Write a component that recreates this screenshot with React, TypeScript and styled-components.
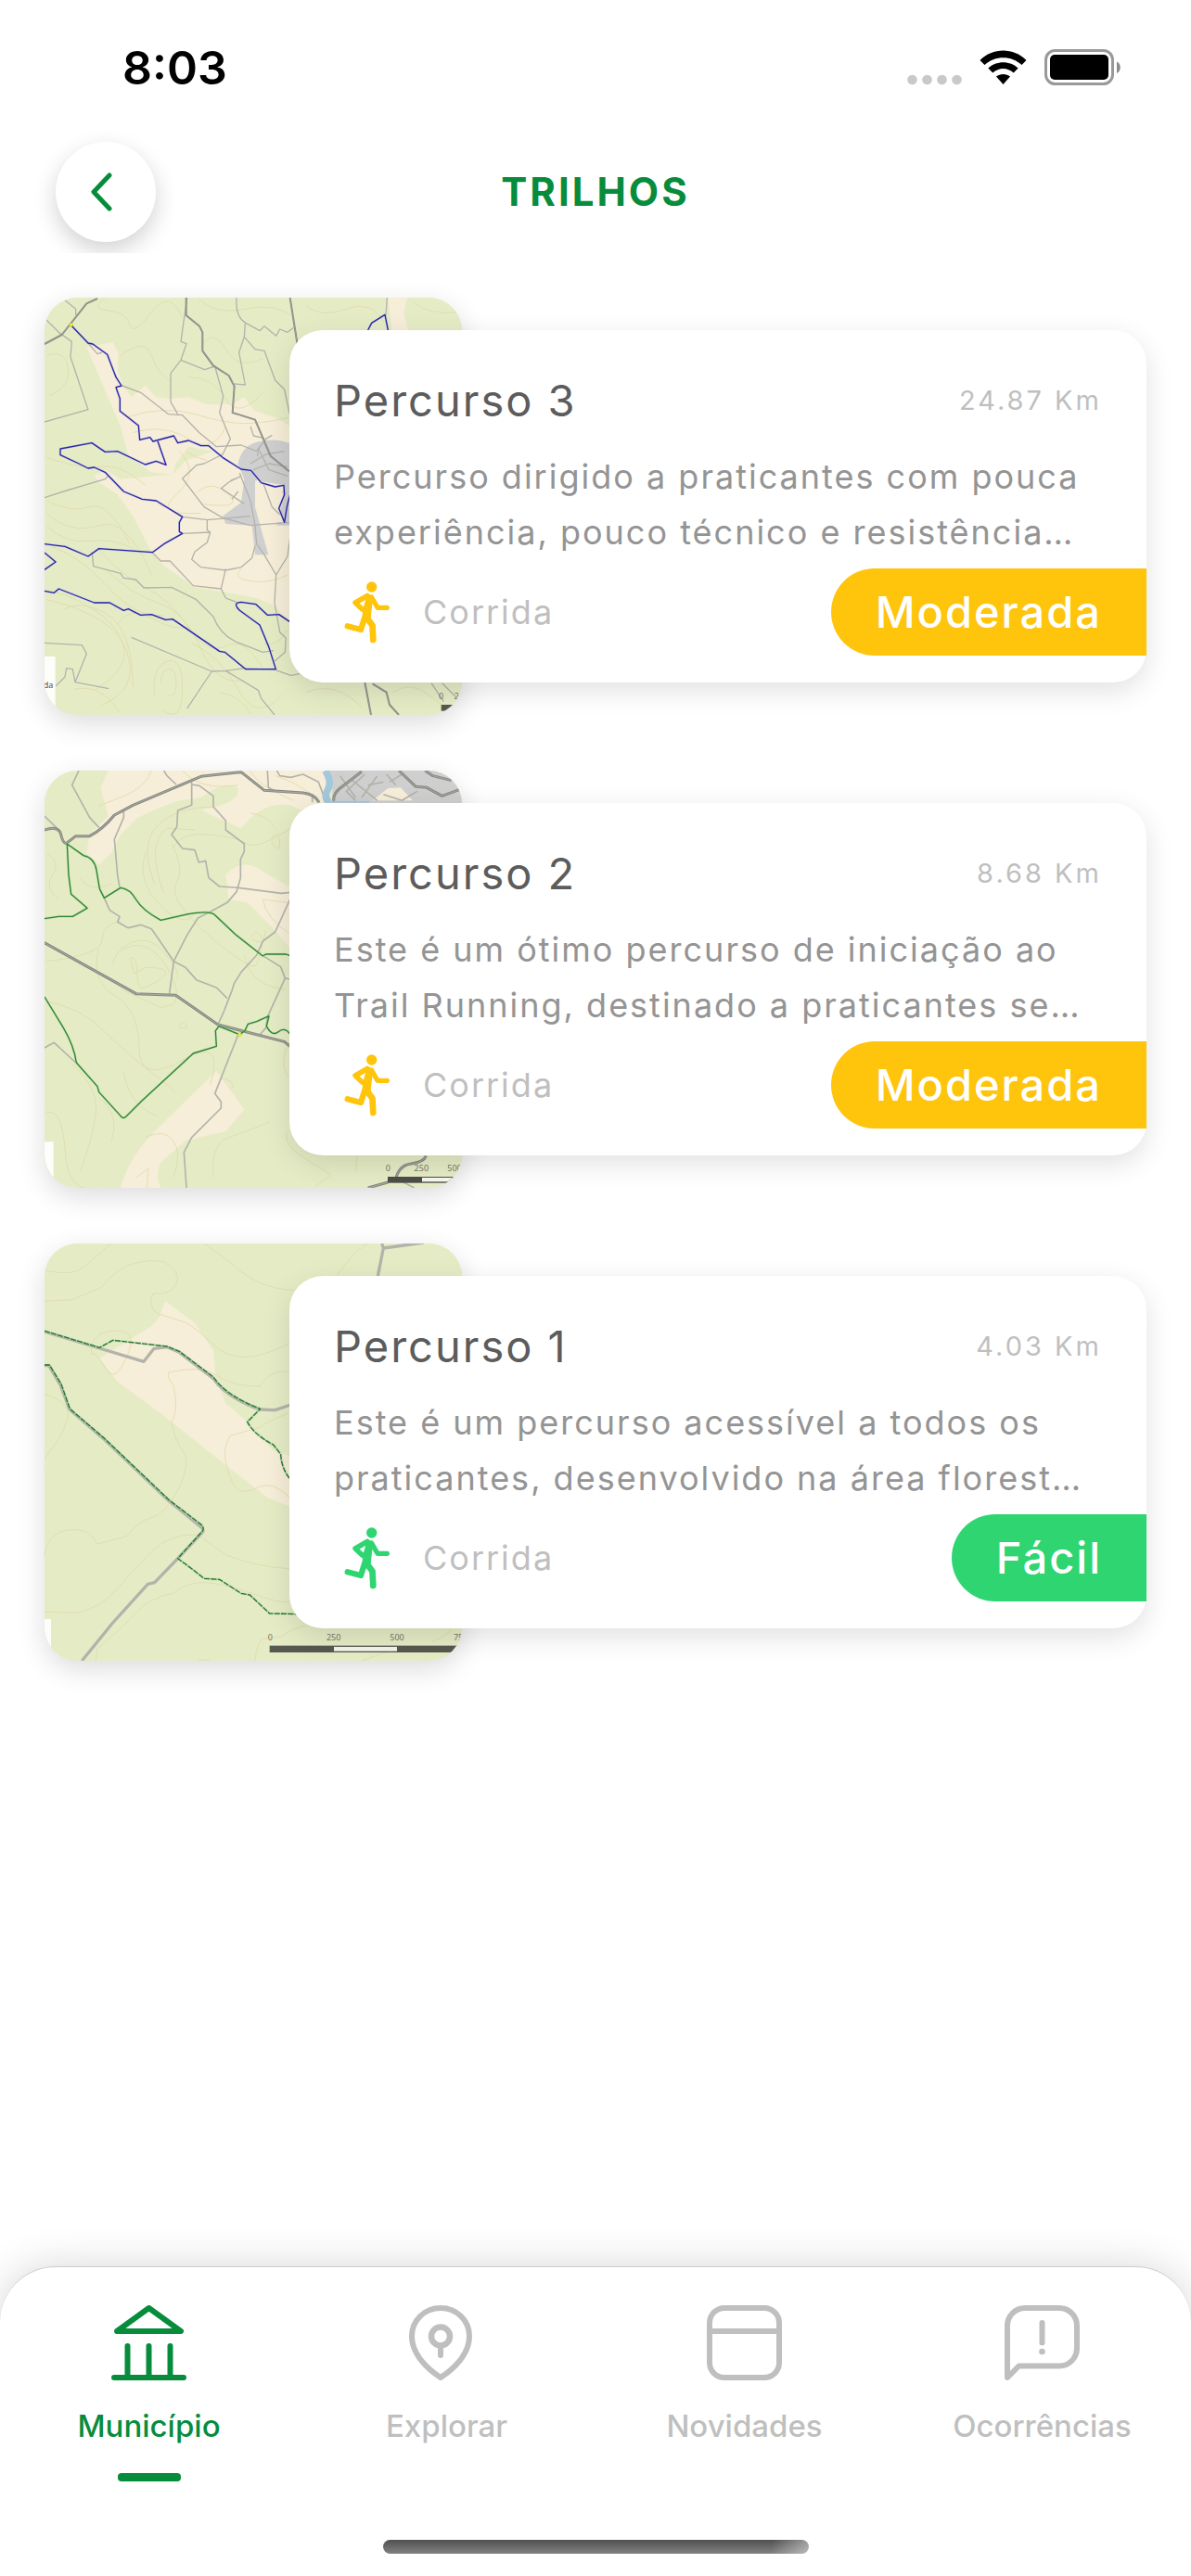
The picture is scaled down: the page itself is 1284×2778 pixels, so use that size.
import React from 'react';
import styled, { createGlobalStyle } from 'styled-components';

const GREEN = '#078c3c';
const GREY = '#bfbfbf';
const YELLOW = '#ffc40c';
const LIME = '#2fd571';

const GlobalStyle = createGlobalStyle`
  *, *::before, *::after { box-sizing: border-box; }
  body { margin: 0; background: #fff; font-family: Inter, "Liberation Sans", sans-serif; }
  h1, h2, p, ul { margin: 0; padding: 0; }
`;

const Screen = styled.div`
  min-height: 100vh;
  display: flex;
  flex-direction: column;
  background: #fff;
`;

const StatusBar = styled.div`
  height: 138px;
  padding: 8px 74px 0 132px;
  display: flex;
  align-items: center;
  justify-content: space-between;
`;

const Clock = styled.time`
  font-size: 50px;
  line-height: 60px;
  font-weight: 600;
  color: #000;
`;

const StatusIcons = styled.div`
  display: flex;
  align-items: center;
  gap: 19px;
`;

const Header = styled.header`
  display: grid;
  grid-template-columns: 1fr auto 1fr;
  align-items: center;
  padding: 15px 60px 12px;
  overflow: hidden;
`;

const BackButton = styled.button`
  width: 108px;
  height: 108px;
  padding: 0 9px 0 0;
  border: 0;
  border-radius: 50%;
  background: #fff;
  box-shadow: 0 9px 24px rgba(0, 0, 0, 0.18);
  display: grid;
  place-items: center;
  cursor: pointer;
`;

const Title = styled.h1`
  font-size: 42px;
  line-height: 48px;
  font-weight: 700;
  letter-spacing: 3px;
  color: ${GREEN};
`;

const TrailList = styled.ul`
  list-style: none;
  display: flex;
  flex-direction: column;
  gap: 60px;
  padding: 48px;
`;

const Trail = styled.li`
  display: flex;
  align-items: center;
`;

const MapFrame = styled.div`
  flex: none;
  width: 450px;
  height: 450px;
  border-radius: 36px;
  overflow: hidden;
  background: #e5ecc5;
  box-shadow: 0 9px 30px rgba(0, 0, 0, 0.14);

  svg { display: block; width: 100%; height: 100%; }
`;

const Card = styled.article`
  flex: 1;
  min-width: 0;
  margin-left: -186px;
  padding: 47px 0 29px 48px;
  border-radius: 36px;
  background: #fff;
  box-shadow: 0 9px 30px rgba(0, 0, 0, 0.12);
`;

const CardHead = styled.div`
  display: flex;
  align-items: center;
  justify-content: space-between;
  padding-right: 48px;
`;

const TrailName = styled.h2`
  font-size: 47px;
  line-height: 58px;
  font-weight: 400;
  letter-spacing: 2px;
  color: #5c5c5c;
`;

const Distance = styled.span`
  font-size: 29px;
  line-height: 36px;
  letter-spacing: 3px;
  color: ${GREY};
`;

const Description = styled.p`
  margin-top: 23px;
  padding-right: 24px;
  font-size: 36px;
  line-height: 60px;
  letter-spacing: 2px;
  color: #949494;
`;

const CardFoot = styled.div`
  margin-top: 9px;
  display: flex;
  align-items: center;
  justify-content: space-between;
`;

const Activity = styled.div`
  display: flex;
  align-items: center;
  gap: 24px;
  font-size: 36px;
  line-height: 48px;
  letter-spacing: 2px;
  color: ${GREY};
`;

const Badge = styled.span<{ $color: string }>`
  padding: 18px 48px;
  border-radius: 47px 0 0 47px;
  background: ${(p) => p.$color};
  color: #fff;
  font-size: 47px;
  line-height: 58px;
  font-weight: 500;
  letter-spacing: 2px;
`;

const TabBar = styled.nav`
  margin-top: auto;
  padding-top: 41px;
  border-top: 1px solid #ccc;
  border-radius: 60px 60px 0 0;
  background: #fff;
  box-shadow: 0 0 45px rgba(0, 0, 0, 0.16);
  display: flex;
  flex-direction: column;
  align-items: center;
`;

const Tabs = styled.div`
  width: 100%;
  display: grid;
  grid-template-columns: repeat(4, 1fr);
`;

const Tab = styled.a<{ $active?: boolean }>`
  display: flex;
  flex-direction: column;
  align-items: center;
  color: ${(p) => (p.$active ? GREEN : GREY)};
  font-size: 33px;
  line-height: 42px;
  font-weight: 500;
  text-decoration: none;

  svg { margin-bottom: 28px; }

  &::after {
    content: '';
    width: 68px;
    height: 9px;
    margin-top: 30px;
    border-radius: 4px;
    background: ${(p) => (p.$active ? GREEN : 'transparent')};
  }
`;

const HomeIndicator = styled.div`
  width: 459px;
  height: 15px;
  margin: 63px 0 24px;
  border-radius: 8px;
  background:
    linear-gradient(100deg, transparent 91%, rgba(255, 255, 255, 0.45) 100%),
    linear-gradient(#505050, #828282);
`;

/* ---------- icons ---------- */

const SignalDots = () => (
  <svg width="59" height="40" viewBox="0 0 59 40" fill="#c9c9c9" aria-hidden="true">
    {[5.5, 21.5, 37.5, 53.5].map((x) => (
      <circle key={x} cx={x} cy="33" r="5.3" />
    ))}
  </svg>
);

const Wifi = () => (
  <svg width="51" height="40" viewBox="0 0 51 40" aria-hidden="true">
    <path d="M0.5 12C14-2 37-2 50.5 12L45.500 17C34.500 6.500 16.500 6.500 5.500 17Z" />
    <path d="M9.300 20.500C18 12 33 12 41.700 20.500L36.700 25.500C30 19.500 21 19.500 14.300 25.500Z" />
    <path d="M18 29.500C22 26 29 26 33 29.500L25.500 38Z" />
  </svg>
);

const Battery = () => (
  <svg width="84" height="40" viewBox="0 0 84 40" aria-hidden="true">
    <rect x="1.5" y="1.5" width="72" height="36" rx="10" fill="none" stroke="#999" strokeWidth="3" />
    <rect x="6" y="6" width="63" height="27" rx="5" />
    <path d="M78 13.500C83 15.500 83 24 78 26Z" fill="#8c8c8c" />
  </svg>
);

const Chevron = () => (
  <svg width="24" height="42" viewBox="0 0 24 42" fill="none" stroke={GREEN} strokeWidth="5" strokeLinecap="round" strokeLinejoin="round" aria-hidden="true">
    <path d="M20 3L3 21L20 39" />
  </svg>
);

const Runner = ({ color }: { color: string }) => (
  <svg width="72" height="72" viewBox="0 0 72 72" fill="none" stroke={color} strokeLinecap="round" strokeLinejoin="round" aria-hidden="true">
    <circle cx="40.7" cy="9" r="5.7" fill={color} stroke="none" />
    <path d="M36 18.500L23 26L30.500 33" strokeWidth="5.5" />
    <path d="M40.500 20L47 31.300H57.300" strokeWidth="5.3" />
    <path d="M37.500 19L40 20.500L38.500 32L37.500 42L32.500 43L33.500 33Z" fill={color} strokeWidth="4.5" />
    <path d="M33 42.500L29 55L14.700 51.300" strokeWidth="6.3" />
    <path d="M36 43L41.500 50.500L42.300 66" strokeWidth="6.7" />
  </svg>
);

const TabIcon = ({ children }: { children: React.ReactNode }) => (
  <svg width="81" height="81" viewBox="0 0 81 81" fill="none" stroke="currentColor" strokeWidth="6" strokeLinecap="round" strokeLinejoin="round" aria-hidden="true">
    {children}
  </svg>
);

const MunicipioIcon = () => (
  <TabIcon>
    <path d="M40.500 3L75 28H6Z" />
    <path d="M17.500 44V78M40.500 44V78M63.500 44V78M3 78H78" />
  </TabIcon>
);

const ExplorarIcon = () => (
  <TabIcon>
    <path d="M34 3C16.500 3 3 16.500 3 33.500C3 53 20 69 34 78C48 69 65 53 65 33.500C65 16.500 51.500 3 34 3Z" />
    <circle cx="34" cy="33.5" r="10" strokeWidth="6.5" />
    <path d="M34 44V54" />
  </TabIcon>
);

const NovidadesIcon = () => (
  <TabIcon>
    <rect x="3" y="3" width="75" height="75" rx="16" />
    <path d="M3 28H78" />
  </TabIcon>
);

const OcorrenciasIcon = () => (
  <TabIcon>
    <path d="M3 78V22A19 19 0 0 1 22 3H59A19 19 0 0 1 78 22V46A19 19 0 0 1 59 65.500H15.500Z" />
    <path d="M40.500 19V40.500" />
    <circle cx="40.5" cy="50" r="3.3" fill="currentColor" stroke="none" />
  </TabIcon>
);

/* ---------- trail maps ---------- */

const SAND = '#f6eed8';
const ROAD = '#b3b3ab';

type Layers = {
  label: string;
  sand: string[];
  town?: string[];
  holes?: string[];
  contours: string[];
  roads: string[];
  main?: string[];
  trail: string[];
  trailColor: string;
  halo: string;
};

const MapBase = ({
  layers,
  roadWidth = 4,
  mainWidth = 7,
  dash,
  children,
}: {
  layers: Layers;
  roadWidth?: number;
  mainWidth?: number;
  dash?: string;
  children?: React.ReactNode;
}) => (
  <svg viewBox="54 63 1350 1350" role="img" aria-label={layers.label} fill="none" strokeLinejoin="round" strokeLinecap="butt">
    <rect x="54" y="63" width="1350" height="1350" fill="#e5ecc5" />
    {layers.sand.map((d) => <path key={d} d={d} fill={SAND} />)}
    {layers.town?.map((d) => <path key={d} d={d} fill="#cfcfd0" />)}
    {layers.holes?.map((d) => <path key={d} d={d} fill={SAND} />)}
    <g stroke="#dfd8a8" strokeWidth="3" opacity="0.75">
      {layers.contours.map((d) => <path key={d} d={d} />)}
    </g>
    <g stroke={ROAD} strokeWidth={roadWidth}>
      {layers.roads.map((d) => <path key={d} d={d} />)}
    </g>
    {layers.main?.map((d) => (
      <g key={d}>
        <path d={d} stroke="#868881" strokeWidth={mainWidth} />
        <path d={d} stroke="#a9aaa5" strokeWidth={mainWidth / 3} />
      </g>
    ))}
    {layers.trail.map((d) => (
      <g key={d}>
        <path d={d} stroke={layers.halo} strokeWidth="8" opacity="0.5" />
        <path d={d} stroke={layers.trailColor} strokeWidth="4" strokeDasharray={dash} />
      </g>
    ))}
    {children}
  </svg>
);

const map3: Layers = {
  label: 'Mapa do Percurso 3',
  sand: [
    'M190 222L235 215L275 207L293 245L290 300L310 350L335 385L380 347L415 385L460 390L520 385L575 408L660 408L700 385L735 430L800 450L850 480V1120L800 1060L740 1035L635 1015L540 1000L440 930L400 885L340 770L290 700L230 660L215 640L250 620L300 650L470 635L510 590L600 560L520 545L478 600L470 636L400 628L325 575L300 480L240 340Z',
    'M1165 63H1228L1215 110L1230 170H1178Z',
  ],
  town: [
    'M680 600Q690 545 740 530Q800 515 850 535V800L805 800L830 700L740 650L735 740L760 830L778 895L735 895L725 800L640 795L630 770L690 725L700 650Z',
  ],
  holes: ['M735 655L830 670L812 730L825 790L770 790L735 740Z'],
  contours: [
    'M250 63Q200 100 260 105T330 150T400 110T500 130M550 63Q600 120 700 100T850 120M60 250Q120 230 130 290T70 380M300 250Q380 190 400 250T460 330M560 220Q600 160 640 230T760 260M520 320Q600 320 640 390T760 370',
    'M320 450Q440 410 540 440T700 470T850 450M340 500Q440 470 520 520T640 480M490 560Q560 630 480 700T560 760M550 690Q600 650 650 700T560 730M60 720Q140 760 200 740T330 860M60 760Q140 830 230 800T400 960',
    'M230 880Q300 960 380 1000T520 1130T640 1190T760 1260M250 940Q330 1020 420 1050T560 1200T700 1300M60 1040Q160 1060 240 1110T330 1250T240 1380M120 1070Q180 1040 260 1090T340 1330M150 1330Q240 1310 300 1410M410 1350Q400 1260 450 1240T500 1330T440 1400M430 1310Q430 1270 455 1265T480 1310T450 1350',
    'M60 800Q120 860 200 850T350 880M290 1120Q330 1060 400 1100T520 1130M690 940Q660 970 720 980T840 960M760 1180Q800 1200 840 1140M900 1340Q1000 1300 1080 1390M1180 1340Q1240 1300 1300 1350T1380 1400M900 90Q950 130 1030 100T1150 140M1250 80Q1300 120 1390 110',
    'M60 1010Q130 1020 210 1070T310 1190T220 1330M80 870Q170 900 260 1000T440 1090M510 560Q540 580 580 590M60 580Q180 620 240 610T380 670M530 1180Q620 1220 680 1330T820 1350M620 1340Q690 1350 720 1410',
  ],
  roads: [
    'M110 63L155 100V120M60 135L100 175L142 205L138 255L195 425L54 465',
    'M515 63L495 205L513 212L495 265L462 308V400L485 440M495 265L572 296L605 285L632 382L620 435L655 520L630 570L570 600L545 605L500 648L570 740L630 775L720 800L845 790',
    'M675 63Q670 125 705 145L750 170L765 155L803 187L815 165L840 175L860 160M703 145L700 190L683 240L703 345L668 342M700 190L735 230L765 235L800 330L830 360L848 445',
    'M195 210L225 245L240 240M305 348L365 370L455 440L500 443L555 500L610 545L690 540L740 560L770 520L790 508M720 480L730 510L765 518M740 560L750 545L742 575',
    'M54 710L115 690L250 650L260 640M208 885L212 932L300 955L310 970L350 975L375 1002L465 1000L545 1040L600 1095Q620 1150 670 1175L760 1210L795 1205',
    'M400 885L430 915H460L535 995L625 1005L640 1035L680 1050M625 1005L640 940M500 772L580 782V815L590 822L500 826M590 822L580 855L540 885L530 910L560 935L640 945L690 935L725 905L735 865M580 782L720 770',
    'M685 630L720 720L735 800L740 860L765 895L803 960L840 900L848 840M803 960L798 1050L815 1145L835 1165L832 1210L798 1240',
    'M335 1162L595 1272L515 1392M595 1272L640 1270L745 1333L755 1360L798 1413M640 1270L700 1262L800 1267L850 1285L880 1280',
    'M54 1180L175 1187L190 1215L153 1307L262 1328M153 1307L145 1265L125 1262L120 1290L90 1320',
    'M720 600L770 570L830 560M730 620L780 600L840 610M750 560L780 620L840 640M690 640L650 660L625 680L700 730M655 655L680 645M660 715L680 690M760 660L790 740L815 765M1162 63L1158 120M1305 1310L1345 1370M1340 1310L1385 1355',
  ],
  main: [
    'M54 213L110 183L190 82L225 66',
    'M512 63V120L555 155L565 175V235L600 283L650 315L668 350L662 435L735 458L785 575L845 625',
    'M848 63L872 215M1090 1308L1110 1413M1115 1312L1160 1340L1170 1380L1200 1413',
  ],
  trail: [
    'M140 152L195 210L210 213L257 247L285 320L303 348L285 353L298 390V430L358 477L362 523L395 515L405 528L472 510L485 533L520 525L560 542H585L630 580L690 618L722 622L755 662L800 675L828 670L830 700L812 745L830 790L838 740L848 700',
    'M420 527L447 604L415 592L380 603L290 560L250 562L207 533L105 552V572L165 600L195 615L215 612L250 628L310 690L370 715L415 720L500 772L490 790V820L500 826L440 860L403 887L230 875L195 900L120 868L54 860M54 888L90 918L54 943',
    'M54 1012L85 1018L100 1005L215 1050H265L310 1075L325 1070L365 1090L400 1088L445 1105L468 1103L620 1207L637 1210L705 1265H802L780 1195L750 1122L685 1075Q660 1050 690 1048L738 1055L775 1090L812 1088L848 1112M1100 168L1112 145L1155 118L1165 168',
  ],
  trailColor: '#2a25a0',
  halo: '#b9bdf0',
};

const map2: Layers = {
  label: 'Mapa do Percurso 2',
  sand: [
    'M260 63H965L960 166L880 190L850 175Q760 160 690 250L600 210L560 190Q690 170 680 120Q640 90 560 150L490 160Q400 190 350 220L300 270L270 330L230 368L190 330L200 270L260 210L235 120Z',
    'M640 400Q700 340 760 390L850 440V640L790 570L710 490L650 480Z',
    'M610 1035L700 1160L640 1230L510 1260L430 1330Q410 1370 430 1413H300Q320 1330 400 1240Z',
  ],
  town: ['M965 63H1404V168H985L985 110Z'],
  holes: ['M1115 160L1165 120L1205 118L1245 160Z'],
  contours: [
    'M400 63Q380 120 300 150T230 180M410 430Q360 300 420 240T600 180M440 460Q380 300 450 250L540 255M470 310Q500 260 590 270T710 300T850 250M720 200Q780 210 800 250M60 330Q110 360 80 400T100 480M170 410Q200 460 270 430',
    'M465 300Q510 380 480 430T590 600T740 690T770 580M380 330Q350 420 430 500T540 520M300 550Q240 560 240 610T60 680M300 640Q380 580 440 650T480 740M275 690Q280 640 340 630T450 700T470 820L430 830L300 770',
    'M330 670Q350 660 352 700T360 760T425 740T380 700L345 720L330 670M230 640Q200 740 280 790T360 960T500 1000T590 1080M60 810Q170 830 240 900T400 1040T470 1100',
    'M490 885Q500 870 512 885T490 895ZM840 490L760 480Q770 540 845 590M60 1170Q110 1150 120 1290T210 1413M140 1010Q230 1090 220 1170T170 1360M380 1250Q440 1220 470 1260T470 1380M350 1380L390 1350L385 1413M310 1040Q330 1150 420 1180',
    'M600 1380Q590 1270 650 1250T780 1200M840 1230Q820 1270 900 1320T980 1370T930 1410M1065 1310L1060 1360M620 1060Q670 1060 660 1090M790 300Q785 275 800 272T815 300T790 300M725 600Q735 570 755 600T725 610M845 940Q810 1020 848 1060M700 660Q720 760 830 770M230 1120Q300 1180 270 1260',
    'M800 80Q870 100 930 150M720 63Q740 110 860 160M500 63Q560 130 680 110',
  ],
  roads: [
    'M165 63L143 110L200 215L230 247M54 210L95 250M440 63L450 80L480 108M530 100V175L485 192L482 245L465 270L500 315L540 320L553 360L575 355L585 410L620 438L680 442L820 460L850 457',
    'M530 108L555 112L600 145V180L640 225V255L700 300V325L688 350V410L675 455L645 490L590 520L550 540L515 595L472 680L458 785',
    'M775 63L778 118L800 130M805 63L815 80L850 85L890 75L940 100L955 140M920 140V166M310 195V215L280 285L290 400L297 440M247 475L265 515L297 535L290 553L325 572L365 562L400 575L472 680L510 700L545 740L610 765L645 800',
    'M848 480L800 585L760 615L740 660L690 715L668 750L660 775L635 840L615 885M765 665L818 698L832 735L775 860L770 895L750 918M832 735L850 738M680 918L605 1108L625 1135V1155L530 1250L505 1298L513 1413',
    'M54 960L85 943L155 1008M1205 1390L1250 1413M1010 80L1060 150M1050 95L1130 160M1090 75L1030 130L1060 160M1130 80L1080 150M1160 75L1190 110M1150 140L1210 160L1260 130M1100 110L1150 100M1210 75L1170 100',
  ],
  main: [
    'M54 255Q100 240 107 270T125 298L155 275H200Q240 255 280 207L340 175L560 82L690 68L765 127L890 135Q930 140 942 166',
    'M54 620L350 785L478 790L615 885L830 940L848 955',
    'M990 166Q985 140 1010 120L1080 66M1200 63L1255 115L1290 118L1340 145L1395 125M1285 63L1310 80L1370 95M1100 1413L1165 1395M1190 1385Q1200 1340 1240 1335T1288 1310',
  ],
  trail: [
    'M54 542L100 535H145L192 508L140 463L132 400L127 300L180 338Q215 345 222 385L232 445L247 475L300 442Q330 445 350 480T430 547L520 527Q590 515 605 530L670 592L760 663L770 657H835L848 662',
    'M54 795L115 895Q150 955 157 1008L225 1085L230 1103L300 1180Q308 1192 318 1182L370 1130L535 978L610 955L607 905L618 890L685 917L702 905L712 883L740 875L780 857L772 890Q790 925 810 908T848 915',
  ],
  trailColor: '#2f8434',
  halo: '#a6d79b',
};

const map1: Layers = {
  label: 'Mapa do Percurso 1',
  sand: ['M445 250L540 320L600 410L608 500L640 580L710 640L790 730L848 750V915L775 885L640 780L440 620L290 510L232 435L400 330L425 300Z'],
  contours: [
    'M54 150Q150 170 180 140L270 63M54 250L140 245L235 207Q290 140 345 127T440 122Q500 160 480 195T405 225Q385 265 420 290L515 320Q560 350 600 390T700 430T848 385',
    'M570 63L650 120Q690 160 740 185T860 215M1000 166L1060 90L1100 63M205 420Q200 350 280 345T320 430T250 465T205 420M455 480Q560 455 610 490T750 525Q780 470 848 478',
    'M455 480Q450 500 470 520Q490 600 465 640Q470 690 510 750Q520 800 480 870T400 950T320 1010L225 1035Q200 980 130 990T54 1080M54 550Q150 580 125 640Q110 690 75 730T54 790',
    'M848 610Q770 640 750 658L655 685Q630 720 640 770T670 850T750 850Q790 830 848 885M54 1255L160 1258Q240 1240 290 1180T400 1060T550 1005L640 1070Q740 1110 848 1115',
    'M220 1413L225 1375Q300 1310 380 1230Q430 1200 470 1195Q520 1155 580 1160T740 1200T850 1218M735 1413Q740 1340 770 1340L820 1335Q850 1310 900 1300M1080 1413L1160 1385M1310 1350Q1360 1330 1370 1310M550 1413Q570 1405 590 1413',
  ],
  roads: [
    'M54 348L232 402L375 445L408 403L450 398L490 415L600 500Q640 560 750 600L800 602L850 585',
    'M54 458H68L105 520L135 600L245 695L455 895L565 985L567 995L487 1080L410 1160L388 1165L275 1290L175 1413M1145 63L1150 78L1132 168M1150 78L1280 60',
  ],
  trail: [
    'M54 346L232 400L275 376L450 396L490 412L600 495Q640 555 752 598L710 640Q730 680 795 715L818 745Q820 790 848 825',
    'M54 456H70L108 518L136 598L247 693L457 893L555 968Q572 980 566 992L485 1082L530 1115L570 1147L620 1150L690 1195L718 1200L782 1260L870 1262',
  ],
  trailColor: '#2d6f35',
  halo: '#9fdc9a',
};

const scaleText = {
  fill: '#77786a',
  fontSize: 27,
  fontFamily: '"Noto Sans", sans-serif',
  textAnchor: 'middle' as const,
};

const Map3 = () => (
  <MapBase layers={map3} roadWidth={4} mainWidth={6}>
    <circle cx="140" cy="151" r="6" fill="#f0f02a" stroke="#9a9a30" strokeWidth="1" />
    <rect x="54" y="1224" width="35" height="189" fill="#fdfdfa" />
    <text x="66" y="1326" {...scaleText} fill="#4c4c48">da</text>
    <text x="1337" y="1361" {...scaleText}>0</text>
    <text x="1387" y="1361" {...scaleText}>2</text>
    <rect x="1337" y="1380" width="67" height="20" fill="#57584f" />
  </MapBase>
);

const Map2 = () => (
  <MapBase layers={map2} roadWidth={5} mainWidth={9}>
    <path d="M962 63Q985 100 970 125T975 166" stroke="#a3c7dc" strokeWidth="22" />
    <path d="M975 164H1105" stroke="#a3c7dc" strokeWidth="6" />
    <circle cx="685" cy="917" r="6" fill="#f0f02a" stroke="#b0b030" strokeWidth="1" />
    <rect x="54" y="1264" width="29" height="149" fill="#fdfdfa" />
    <text x="1165" y="1359" {...scaleText}>0</text>
    <text x="1273" y="1359" {...scaleText}>250</text>
    <text x="1380" y="1359" {...scaleText}>500</text>
    <rect x="1164" y="1377" width="240" height="20" fill="#4d4e47" />
    <rect x="1275" y="1380" width="129" height="13" fill="#f6f7f0" />
  </MapBase>
);

const Map1 = () => (
  <MapBase layers={map1} roadWidth={10} dash="18 4">
    <rect x="54" y="1278" width="21" height="135" fill="#fdfdfa" />
    <text x="784" y="1346" {...scaleText}>0</text>
    <text x="989" y="1346" {...scaleText}>250</text>
    <text x="1194" y="1346" {...scaleText}>500</text>
    <text x="1400" y="1346" {...scaleText}>750</text>
    <rect x="782" y="1364" width="622" height="22" fill="#57584f" />
    <rect x="990" y="1368" width="204" height="14" fill="#f3f4ec" />
  </MapBase>
);

/* ---------- page ---------- */

const trails = [
  {
    name: 'Percurso 3',
    km: '24.87 Km',
    text: 'Percurso dirigido a praticantes com pouca experiência, pouco técnico e resistência…',
    level: 'Moderada',
    color: YELLOW,
    Map: Map3,
  },
  {
    name: 'Percurso 2',
    km: '8.68 Km',
    text: 'Este é um ótimo percurso de iniciação ao Trail Running, destinado a praticantes se…',
    level: 'Moderada',
    color: YELLOW,
    Map: Map2,
  },
  {
    name: 'Percurso 1',
    km: '4.03 Km',
    text: 'Este é um percurso acessível a todos os praticantes, desenvolvido na área florest…',
    level: 'Fácil',
    color: LIME,
    Map: Map1,
  },
];

const tabs = [
  { label: 'Município', Icon: MunicipioIcon, active: true },
  { label: 'Explorar', Icon: ExplorarIcon },
  { label: 'Novidades', Icon: NovidadesIcon },
  { label: 'Ocorrências', Icon: OcorrenciasIcon },
];

export default function App() {
  return (
    <Screen>
      <GlobalStyle />
      <StatusBar>
        <Clock>8:03</Clock>
        <StatusIcons>
          <SignalDots />
          <Wifi />
          <Battery />
        </StatusIcons>
      </StatusBar>
      <Header>
        <BackButton type="button" aria-label="Voltar">
          <Chevron />
        </BackButton>
        <Title>TRILHOS</Title>
      </Header>
      <main>
        <TrailList>
          {trails.map(({ name, km, text, level, color, Map }) => (
            <Trail key={name}>
              <MapFrame>
                <Map />
              </MapFrame>
              <Card>
                <CardHead>
                  <TrailName>{name}</TrailName>
                  <Distance>{km}</Distance>
                </CardHead>
                <Description>{text}</Description>
                <CardFoot>
                  <Activity>
                    <Runner color={color} />
                    Corrida
                  </Activity>
                  <Badge $color={color}>{level}</Badge>
                </CardFoot>
              </Card>
            </Trail>
          ))}
        </TrailList>
      </main>
      <TabBar aria-label="Principal">
        <Tabs>
          {tabs.map(({ label, Icon, active }) => (
            <Tab key={label} href="#" $active={active} aria-current={active ? 'page' : undefined}>
              <Icon />
              {label}
            </Tab>
          ))}
        </Tabs>
        <HomeIndicator />
      </TabBar>
    </Screen>
  );
}
